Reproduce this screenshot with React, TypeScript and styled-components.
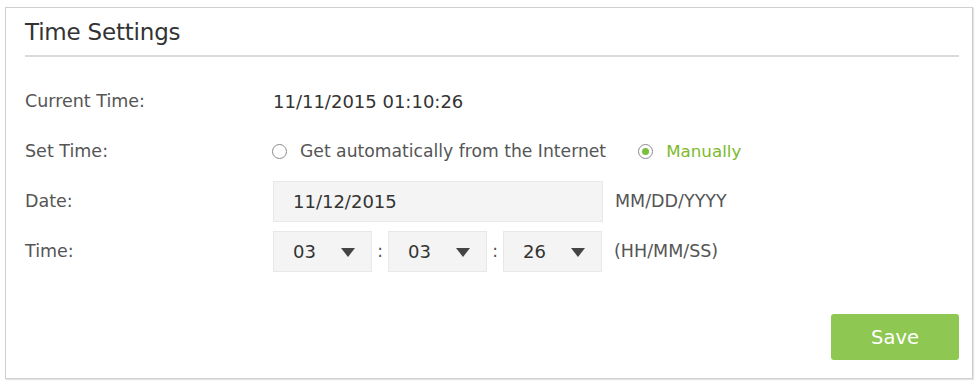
import React from "react";
import styled, { createGlobalStyle } from "styled-components";

const Global = createGlobalStyle`
  html, body { margin: 0; padding: 0; background: #fff; }
  body { font-family: "DejaVu Sans", Verdana, sans-serif; }
`;

const Page = styled.div`
  padding: 7px 6px 5px 5px;
  width: 979px;
  height: 384px;
  box-sizing: border-box;
`;

const Panel = styled.div`
  border: 1px solid #cfcfcf;
  box-shadow: 1px 1px 1px #e4e4e4;
  height: 372px;
  box-sizing: border-box;
  padding: 0 13px 0 19px;
  display: flex;
  flex-direction: column;
`;

const Title = styled.h1`
  margin: 0;
  font-weight: normal;
  font-size: 23px;
  letter-spacing: -0.2px;
  color: #333;
  height: 47px;
  line-height: 48px;
  border-bottom: 2px solid #dadada;
`;

const Form = styled.div`
  display: flex;
  flex-direction: column;
  padding-top: 19px;
`;

const Row = styled.div`
  display: flex;
  align-items: center;
  height: 50px;
`;

const Label = styled.div`
  width: 248px;
  font-size: 17.5px;
  color: #555;
`;

const Value = styled.div`
  font-size: 18px;
  color: #333;
`;

const RadioGroup = styled.div`
  display: flex;
  align-items: center;
  gap: 33px;
`;

const RadioItem = styled.label<{ $checked?: boolean }>`
  display: flex;
  align-items: center;
  gap: 13px;
  font-size: ${(p) => (p.$checked ? "16.7px" : "17.2px")};
  color: ${(p) => (p.$checked ? "#7cb92c" : "#555")};
  margin-left: -1px;
`;

const RadioCircle = styled.span<{ $checked?: boolean }>`
  width: 15px;
  height: 15px;
  border-radius: 50%;
  border: 1px solid #8a8a8a;
  box-sizing: border-box;
  display: inline-flex;
  align-items: center;
  justify-content: center;
  &::after {
    content: "";
    width: 7px;
    height: 7px;
    border-radius: 50%;
    background: ${(p) => (p.$checked ? "#78c13a" : "transparent")};
  }
`;

const Field = styled.div<{ $w: number }>`
  width: ${(p) => p.$w}px;
  height: 41px;
  box-sizing: border-box;
  background: #f4f4f4;
  border: 1px solid #e8e8e8;
  display: flex;
  align-items: center;
  justify-content: space-between;
  padding: 0 16px 0 19px;
  font-size: 18px;
  color: #333;
`;

const Hint = styled.div`
  margin-left: 12px;
  font-size: 17.5px;
  color: #555;
`;

const Colon = styled.span`
  width: 16px;
  text-align: center;
  font-size: 17px;
  color: #555;
`;

const Arrow = styled.span`
  width: 0;
  height: 0;
  border-left: 7px solid transparent;
  border-right: 7px solid transparent;
  border-top: 9px solid #444;
  margin-top: 2px;
`;

const Footer = styled.div`
  display: flex;
  justify-content: flex-end;
  margin-top: 38px;
`;

const SaveButton = styled.button`
  width: 128px;
  height: 46px;
  border: none;
  border-radius: 3px;
  background: #8fc753;
  color: #fff;
  font-family: "DejaVu Sans", Verdana, sans-serif;
  font-size: 19.5px;
  cursor: pointer;
`;

const Select = ({ v }: { v: string }) => (
  <Field $w={99}>
    <span>{v}</span>
    <Arrow />
  </Field>
);

export default function App() {
  return (
    <Page>
      <Global />
      <Panel>
        <Title>Time Settings</Title>
        <Form>
          <Row>
            <Label>Current Time:</Label>
            <Value>11/11/2015 01:10:26</Value>
          </Row>
          <Row>
            <Label>Set Time:</Label>
            <RadioGroup>
              <RadioItem>
                <RadioCircle />
                Get automatically from the Internet
              </RadioItem>
              <RadioItem $checked>
                <RadioCircle $checked />
                Manually
              </RadioItem>
            </RadioGroup>
          </Row>
          <Row>
            <Label>Date:</Label>
            <Field $w={330}>11/12/2015</Field>
            <Hint>MM/DD/YYYY</Hint>
          </Row>
          <Row>
            <Label>Time:</Label>
            <Select v="03" />
            <Colon>:</Colon>
            <Select v="03" />
            <Colon>:</Colon>
            <Select v="26" />
            <Hint>(HH/MM/SS)</Hint>
          </Row>
        </Form>
        <Footer>
          <SaveButton>Save</SaveButton>
        </Footer>
      </Panel>
    </Page>
  );
}
